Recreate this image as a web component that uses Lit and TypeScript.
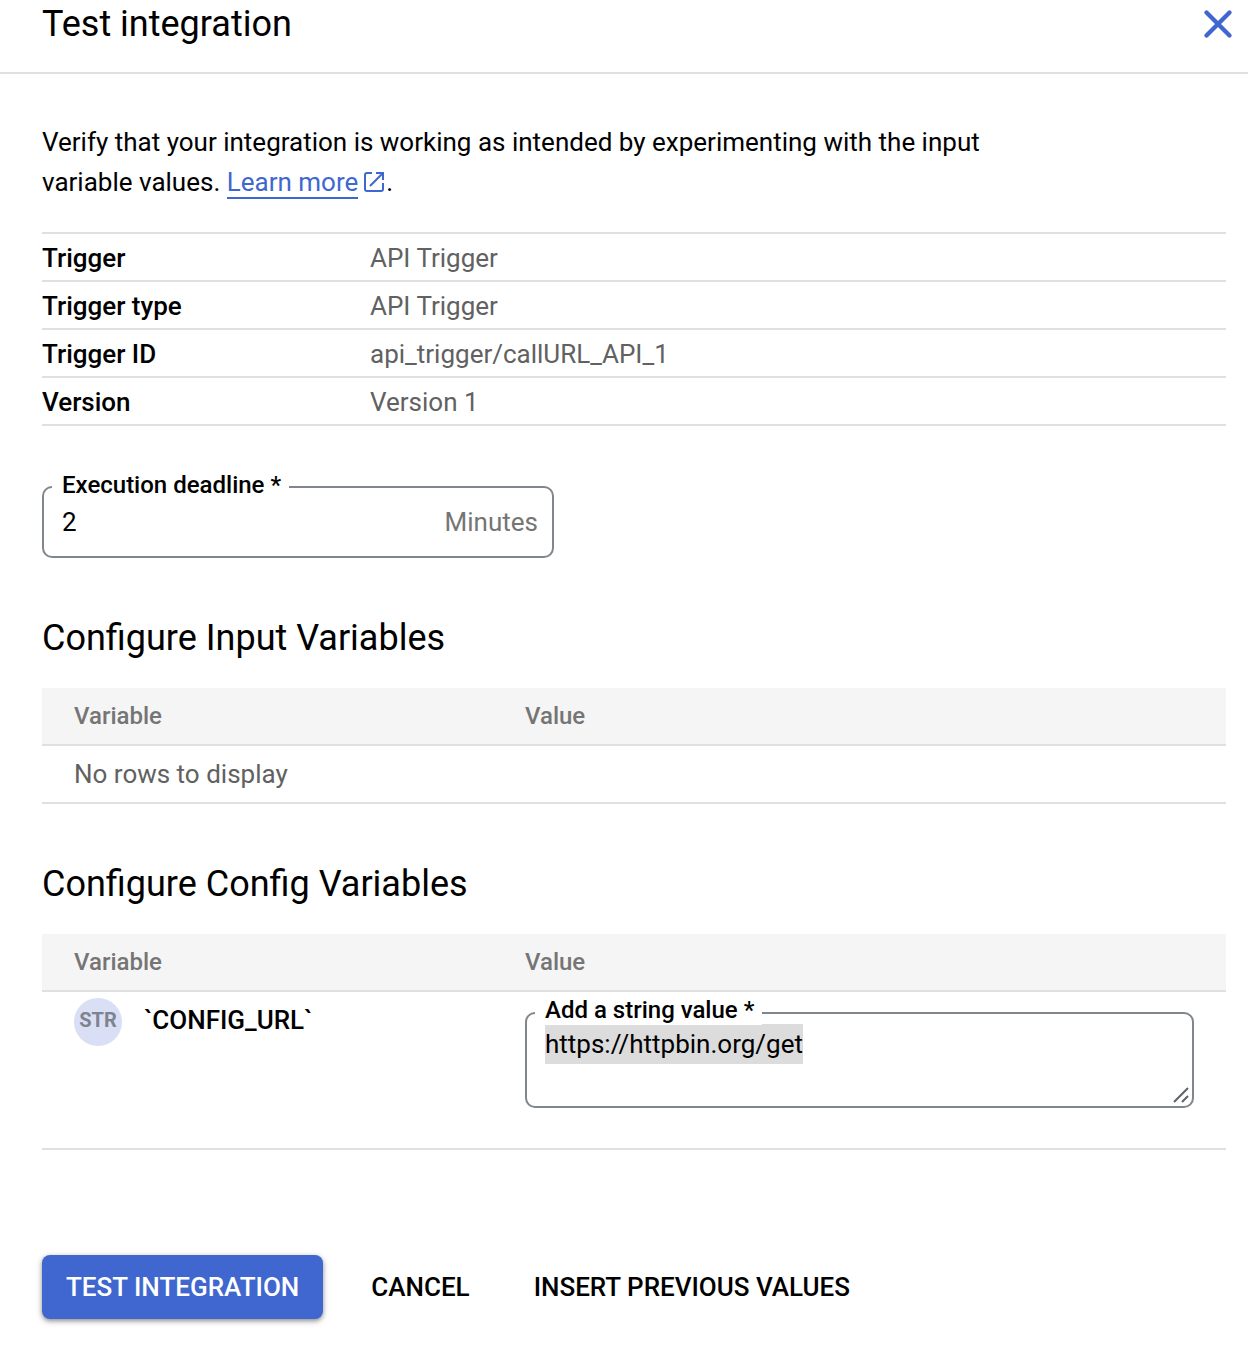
import { LitElement, html, css } from "lit";
import { customElement, property, query, state } from "lit/decorators.js";

interface TriggerDetail {
  name: string;
  value: string;
}

interface ConfigVariable {
  type: string;
  name: string;
  value: string;
}

@customElement("trigger-details")
class TriggerDetails extends LitElement {
  @property({ attribute: false }) details: TriggerDetail[] = [];

  static styles = css`
    :host {
      display: block;
    }
    .details {
      width: 100%;
      border-collapse: separate;
      border-spacing: 0;
      border-top: 2px solid #e0e0e0;
      table-layout: fixed;
    }
    .name,
    .value {
      box-sizing: border-box;
      height: 48px;
      padding: 2px 0 0;
      border-bottom: 2px solid #e0e0e0;
      text-align: left;
      vertical-align: middle;
    }
    .name {
      width: 328px;
      font-weight: 500;
      color: #000;
    }
    .value {
      color: #616161;
    }
  `;

  render() {
    return html`
      <table class="details">
        <tbody>
          ${this.details.map(
            (d) => html`
              <tr>
                <th class="name" scope="row">${d.name}</th>
                <td class="value">${d.value}</td>
              </tr>
            `
          )}
        </tbody>
      </table>
    `;
  }
}

@customElement("variable-table")
class VariableTable extends LitElement {
  @property({ attribute: false }) variables: ConfigVariable[] = [];
  @query(".text") textArea?: HTMLTextAreaElement;

  static styles = css`
    :host {
      display: block;
    }
    .grid {
      width: 100%;
      border-collapse: separate;
      border-spacing: 0;
      table-layout: fixed;
    }
    .head {
      box-sizing: border-box;
      height: 58px;
      padding: 0;
      background: #f5f5f5;
      border-bottom: 2px solid #e0e0e0;
      color: #757575;
      font-size: 24px;
      font-weight: 500;
      text-align: left;
    }
    .first {
      width: 483px;
      padding-left: 32px;
    }
    .cell {
      box-sizing: border-box;
      height: 58px;
      padding: 0;
      border-bottom: 2px solid #e0e0e0;
      color: #616161;
      vertical-align: top;
    }
    .empty {
      padding-left: 32px;
      vertical-align: middle;
    }
    .variable {
      display: flex;
      align-items: flex-start;
      gap: 22px;
      padding: 6px 0 0 32px;
      color: #000;
      font-weight: 500;
      line-height: 44px;
    }
    .badge {
      width: 48px;
      height: 48px;
      border-radius: 50%;
      background: #d9dff5;
      color: #80838f;
      font-size: 20px;
      font-weight: 700;
      text-align: center;
    }
    .editor {
      padding: 20px 32px 40px 0;
    }
    .field {
      position: relative;
      display: flex;
    }
    .label {
      position: absolute;
      top: -16px;
      left: 10px;
      padding: 0 8px 0 10px;
      background: #fff;
      color: #000;
      font-size: 24px;
      line-height: 29px;
      font-weight: 500;
    }
    .text {
      box-sizing: border-box;
      flex: 1;
      min-width: 0;
      height: 96px;
      margin: 0;
      padding: 10px 18px;
      border: 2px solid #80868b;
      border-radius: 10px;
      outline: none;
      background: #fff;
      color: #000;
      font: inherit;
      line-height: 40px;
      resize: none;
      overflow: hidden;
    }
    .text::selection {
      background: #dcdcdc;
      color: #000;
    }
    .grip {
      position: absolute;
      right: 4px;
      bottom: 4px;
      width: 18px;
      height: 18px;
      fill: none;
      stroke: #5f6368;
      stroke-width: 2;
      pointer-events: none;
    }
  `;

  firstUpdated() {
    this.textArea?.focus();
    this.textArea?.select();
  }

  render() {
    return html`
      <table class="grid">
        <thead>
          <tr>
            <th class="head first" scope="col">Variable</th>
            <th class="head" scope="col">Value</th>
          </tr>
        </thead>
        <tbody>
          ${this.variables.length
            ? this.variables.map(
                (v, i) => html`
                  <tr>
                    <td class="cell">
                      <div class="variable">
                        <span class="badge">${v.type}</span>
                        <span>${"`" + v.name + "`"}</span>
                      </div>
                    </td>
                    <td class="cell">
                      <div class="editor">
                        <div class="field">
                          <textarea
                            class="text"
                            id="value-${i}"
                            spellcheck="false"
                            required
                            .value=${v.value}
                          ></textarea>
                          <label class="label" for="value-${i}">Add a string value *</label>
                          <svg class="grip" viewBox="0 0 18 18" aria-hidden="true">
                            <path d="M2 16 16 2M10 16l6-6" />
                          </svg>
                        </div>
                      </div>
                    </td>
                  </tr>
                `
              )
            : html`<tr>
                <td class="cell empty" colspan="2">No rows to display</td>
              </tr>`}
        </tbody>
      </table>
    `;
  }
}

@customElement("app-root")
class AppRoot extends LitElement {
  @state() private details: TriggerDetail[] = [
    { name: "Trigger", value: "API Trigger" },
    { name: "Trigger type", value: "API Trigger" },
    { name: "Trigger ID", value: "api_trigger/callURL_API_1" },
    { name: "Version", value: "Version 1" },
  ];

  @state() private config: ConfigVariable[] = [
    { type: "STR", name: "CONFIG_URL", value: "https://httpbin.org/get" },
  ];

  static styles = css`
    :host {
      display: block;
      min-height: 100vh;
      background: #fff;
      color: #000;
      font-family: Roboto, "Liberation Sans", sans-serif;
      font-size: 26px;
      line-height: 40px;
    }
    .header {
      display: flex;
      align-items: center;
      justify-content: space-between;
      padding: 0 12px 24px 42px;
      border-bottom: 2px solid #e0e0e0;
    }
    .title,
    .section {
      margin: 0;
      font-size: 36px;
      line-height: 48px;
      font-weight: 400;
    }
    .close {
      display: flex;
      padding: 0;
      border: 0;
      background: none;
      cursor: pointer;
    }
    .close-icon {
      width: 36px;
      height: 36px;
      fill: none;
      stroke: #4067d0;
      stroke-width: 4.4;
      stroke-linecap: round;
    }
    .body {
      padding: 48px 22px 40px 42px;
    }
    .intro {
      max-width: 980px;
      margin: 0 0 30px;
    }
    .link {
      color: #4067d0;
      text-decoration: none;
    }
    .link-text {
      border-bottom: 2px solid #4067d0;
    }
    .external {
      width: 20px;
      height: 20px;
      margin: 0 2px 0 6px;
      vertical-align: -1px;
      fill: none;
      stroke: currentColor;
      stroke-width: 2;
    }
    .deadline {
      position: relative;
      box-sizing: border-box;
      display: flex;
      align-items: center;
      max-width: 512px;
      height: 72px;
      margin: 60px 0 56px;
      padding: 0 14px 0 18px;
      border: 2px solid #80868b;
      border-radius: 10px;
    }
    .deadline-label {
      position: absolute;
      top: -17px;
      left: 8px;
      padding: 0 8px 0 10px;
      background: #fff;
      font-size: 24px;
      line-height: 28px;
      font-weight: 500;
    }
    .deadline-input {
      flex: 1;
      min-width: 0;
      padding: 0;
      border: 0;
      outline: none;
      background: none;
      color: #000;
      font: inherit;
    }
    .unit {
      color: #757575;
    }
    .section {
      margin: 56px 0 26px;
    }
    .actions {
      display: flex;
      align-items: center;
      gap: 32px;
      margin-top: 105px;
    }
    .button {
      height: 64px;
      padding: 0 16px;
      border: 0;
      border-radius: 8px;
      background: none;
      color: #000;
      font: inherit;
      font-weight: 500;
      white-space: nowrap;
      cursor: pointer;
    }
    .primary {
      padding: 0 24px;
      background: #4067d0;
      color: #fff;
      box-shadow: 0 2px 4px rgba(0, 0, 0, 0.35), 0 2px 8px rgba(0, 0, 0, 0.15);
    }
  `;

  render() {
    return html`
      <header class="header">
        <h1 class="title">Test integration</h1>
        <button class="close" type="button" aria-label="Close">
          <svg class="close-icon" viewBox="0 0 36 36" aria-hidden="true">
            <path d="M6.500 6.500l23 23M29.500 6.500l-23 23" />
          </svg>
        </button>
      </header>
      <main class="body">
        <p class="intro">
          Verify that your integration is working as intended by experimenting with the input
          variable values.
          <a class="link" href="#learn-more"
            ><span class="link-text">Learn more</span
            ><svg class="external" viewBox="0 0 20 20" aria-hidden="true">
              <path d="M8 1H3Q1 1 1 3V17Q1 19 3 19H17Q19 19 19 17V11M12 1H19V8M19 1 6 14" /></svg></a>.
        </p>
        <trigger-details .details=${this.details}></trigger-details>
        <div class="deadline">
          <label class="deadline-label" for="deadline">Execution deadline *</label>
          <input class="deadline-input" id="deadline" type="text" inputmode="numeric" value="2" required />
          <span class="unit">Minutes</span>
        </div>
        <h2 class="section">Configure Input Variables</h2>
        <variable-table></variable-table>
        <h2 class="section">Configure Config Variables</h2>
        <variable-table .variables=${this.config}></variable-table>
        <div class="actions">
          <button class="button primary" type="button">TEST INTEGRATION</button>
          <button class="button" type="button">CANCEL</button>
          <button class="button" type="button">INSERT PREVIOUS VALUES</button>
        </div>
      </main>
    `;
  }
}
